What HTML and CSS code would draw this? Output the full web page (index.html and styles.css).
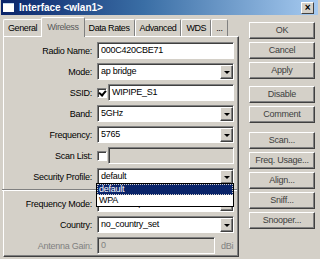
FILE: index.html
```html
<!DOCTYPE html>
<html lang="en">
<head>
<meta charset="utf-8">
<title>Interface &lt;wlan1&gt;</title>
<link rel="stylesheet" href="styles.css">
</head>
<body>
<div class="window">
    <div class="titlebar">
        <span class="app-icon"></span>
        <span class="title">Interface &lt;wlan1&gt;</span>
        <span class="close-btn">&#215;</span>
    </div>
    <div class="content">
        <div class="main">
            <div class="tabs">
                <div class="tab">General</div>
                <div class="tab active">Wireless</div>
                <div class="tab">Data Rates</div>
                <div class="tab">Advanced</div>
                <div class="tab">WDS</div>
                <div class="tab">...</div>
            </div>
            <div class="panel">
                <div class="form">
                    <div class="label">Radio Name:</div>
                    <div class="field"><div class="input">000C420CBE71</div></div>

                    <div class="label">Mode:</div>
                    <div class="field"><div class="input select">ap bridge<span class="arrow"></span></div></div>

                    <div class="label">SSID:</div>
                    <div class="field"><span class="checkbox checked"></span><div class="input">WIPIPE_S1</div></div>

                    <div class="label">Band:</div>
                    <div class="field"><div class="input select">5GHz<span class="arrow"></span></div></div>

                    <div class="label">Frequency:</div>
                    <div class="field"><div class="input select">5765<span class="arrow"></span></div></div>

                    <div class="label">Scan List:</div>
                    <div class="field"><span class="checkbox"></span><div class="input disabled"></div></div>

                    <div class="label">Security Profile:</div>
                    <div class="field">
                        <div class="input select">default<span class="arrow"></span></div>
                        <!-- open dropdown list -->
                        <div class="dropdown">
                            <div class="option selected">default</div>
                            <div class="option">WPA</div>
                        </div>
                    </div>

                    <div class="separator"></div>

                    <div class="label">Frequency Mode:</div>
                    <div class="field"><div class="input select">manual-txpower<span class="arrow"></span></div></div>

                    <div class="label">Country:</div>
                    <div class="field"><div class="input select">no_country_set<span class="arrow"></span></div></div>

                    <div class="label muted">Antenna Gain:</div>
                    <div class="field"><div class="input disabled short">0</div><span class="unit">dBi</span></div>
                </div>
            </div>
        </div>
        <div class="buttons">
            <div class="btn">OK</div>
            <div class="btn">Cancel</div>
            <div class="btn">Apply</div>
            <div class="btn group">Disable</div>
            <div class="btn">Comment</div>
            <div class="btn group wide-gap">Scan...</div>
            <div class="btn">Freq. Usage...</div>
            <div class="btn">Align...</div>
            <div class="btn">Sniff...</div>
            <div class="btn">Snooper...</div>
        </div>
    </div>
</div>
</body>
</html>
```

FILE: styles.css
```css
body {
    margin: 0;
    padding: 0;
    width: 320px;
    height: 259px;
    overflow: hidden;
    background-color: #d4d0c8;
    font-family: "Liberation Sans", Arial, sans-serif;
    font-size: 9px;
    letter-spacing: -0.25px;
    color: #000000;
}

.window {
    height: 259px;
    padding: 0 2px 0 1px;
    box-sizing: border-box;
}

.titlebar {
    height: 15px;
    display: flex;
    align-items: center;
    background: linear-gradient(to right, #0a246a, #3a6ea5 45%, #a6caf0);
    color: #ffffff;
}

.app-icon {
    width: 11px;
    height: 8px;
    margin: 0 5px 0 2px;
    background-color: #ffffff;
    border-top: 1px solid #c0d8f0;
}

.title {
    font-weight: bold;
    font-size: 10px;
    letter-spacing: 0;
    flex: 1;
}

.close-btn {
    width: 11px;
    height: 10px;
    margin-right: 4px;
    background-color: #d4d0c8;
    color: #000000;
    font-weight: bold;
    font-size: 10px;
    line-height: 10px;
    text-align: center;
    border-top: 1px solid #ffffff;
    border-left: 1px solid #ffffff;
    border-right: 1px solid #404040;
    border-bottom: 1px solid #404040;
}

.content {
    display: flex;
}

.main {
    width: 236px;
    margin-left: 2px;
}

/* tab strip */
.tabs {
    display: flex;
    align-items: flex-end;
    height: 20px;
    padding-top: 1px;
    letter-spacing: -0.4px;
}

.tab {
    height: 17px;
    line-height: 16px;
    padding: 0 4px;
    box-sizing: border-box;
    white-space: nowrap;
    border-top: 1px solid #ffffff;
    border-left: 1px solid #ffffff;
    border-right: 1px solid #808080;
    border-radius: 2px 2px 0 0;
    color: #000000;
}

.tab.active {
    height: 20px;
    line-height: 18px;
    margin: 0 -1px -1px -1px;
    padding: 0 5px;
    position: relative;
    z-index: 1;
    background-color: #d4d0c8;
    color: #5a5a5a;
}

.panel {
    height: 221px;
    box-sizing: border-box;
    border-top: 1px solid #ffffff;
    border-left: 1px solid #ffffff;
    border-right: 1px solid #404040;
    border-bottom: 1px solid #404040;
    box-shadow: inset -1px -1px #808080;
    padding: 5px 4px 0 1px;
}

.form {
    display: grid;
    grid-template-columns: 87px 1fr;
    column-gap: 5px;
    row-gap: 4px;
    align-items: center;
}

.label {
    text-align: right;
    white-space: nowrap;
}

.muted {
    color: #808080;
}

.field {
    height: 17px;
    display: flex;
    align-items: center;
    position: relative;
}

.input {
    flex: 1;
    height: 17px;
    box-sizing: border-box;
    background-color: #ffffff;
    border-top: 1px solid #808080;
    border-left: 1px solid #808080;
    border-right: 1px solid #ffffff;
    border-bottom: 1px solid #ffffff;
    box-shadow: inset 1px 1px #404040;
    padding: 0 3px;
    line-height: 15px;
    white-space: nowrap;
    overflow: hidden;
    position: relative;
}

.input.disabled {
    background-color: #d4d0c8;
    color: #808080;
}

.input.short {
    flex: none;
    width: 118px;
}

.unit {
    margin-left: 6px;
    color: #808080;
}

.select {
    padding-right: 16px;
}

.arrow {
    position: absolute;
    top: 1px;
    right: 0;
    width: 13px;
    height: 14px;
    box-sizing: border-box;
    background-color: #d4d0c8;
    border-top: 1px solid #ffffff;
    border-left: 1px solid #ffffff;
    border-right: 1px solid #404040;
    border-bottom: 1px solid #404040;
    box-shadow: inset -1px -1px #808080;
}

.arrow::after {
    content: "";
    position: absolute;
    left: 3px;
    top: 5px;
    border-left: 3px solid transparent;
    border-right: 3px solid transparent;
    border-top: 3px solid #000000;
}

.checkbox {
    width: 10px;
    height: 10px;
    margin-right: 1px;
    flex: none;
    box-sizing: border-box;
    background-color: #ffffff;
    border-top: 1px solid #808080;
    border-left: 1px solid #808080;
    border-right: 1px solid #ffffff;
    border-bottom: 1px solid #ffffff;
    box-shadow: inset 1px 1px #404040;
    position: relative;
}

.checkbox.checked::after {
    content: "";
    position: absolute;
    left: 2px;
    top: 0;
    width: 3px;
    height: 5px;
    border-right: 2px solid #000000;
    border-bottom: 2px solid #000000;
    transform: rotate(40deg);
}

.separator {
    grid-column: 1 / -1;
    height: 0;
    border-top: 1px solid #808080;
    border-bottom: 1px solid #ffffff;
    margin: 0 -3px;
}

.dropdown {
    position: absolute;
    top: 15px;
    left: -1px;
    right: 0;
    z-index: 2;
    background-color: #ffffff;
    border: 1px solid #000000;
}

.option {
    height: 11px;
    line-height: 11px;
    padding-left: 2px;
}

.option.selected {
    background-color: #0a246a;
    color: #ffffff;
    outline: 1px dotted #d4d0c8;
    outline-offset: -1px;
}

/* right-hand command buttons */
.buttons {
    width: 66px;
    margin-left: 10px;
    padding-top: 7px;
    display: flex;
    flex-direction: column;
    gap: 3px;
}

.btn {
    height: 17px;
    box-sizing: border-box;
    line-height: 15px;
    text-align: center;
    color: #404040;
    border-top: 1px solid #ffffff;
    border-left: 1px solid #ffffff;
    border-right: 1px solid #404040;
    border-bottom: 1px solid #404040;
    box-shadow: inset -1px -1px #808080;
}

.btn.group {
    margin-top: 4px;
}

.btn.wide-gap {
    margin-top: 6px;
}
```
